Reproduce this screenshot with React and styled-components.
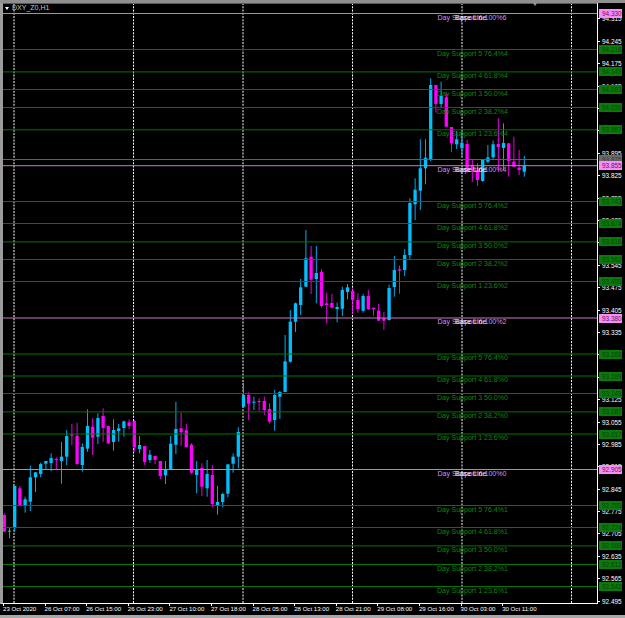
import React from 'react';
import styled, { createGlobalStyle } from 'styled-components';

const GlobalStyle = createGlobalStyle`
  html, body {
    margin: 0;
    padding: 0;
    background: #000;
  }
`;

// type, wick top, body top, body bottom, wick bottom (page y)
const CANDLES = [
  ['m', 513.3, 515, 531.7, 531.7], ['c', 527.3, 530.7, 531.7, 538.3], ['c', 486, 486, 527, 531.7],
  ['m', 486, 488.3, 505.3, 505.3], ['c', 496.7, 499.3, 505.3, 512.7], ['c', 465.7, 477.3, 501.7, 511],
  ['c', 472.3, 472.3, 477.3, 492], ['c', 462.7, 464, 474, 477.3], ['c', 461, 461, 463.7, 469.3],
  ['c', 453.3, 458, 463, 471.3], ['m', 457.3, 459, 460, 469.7], ['c', 442, 456.7, 461, 483.7],
  ['c', 430, 436, 456.7, 465], ['m', 424, 434.3, 435.7, 445.3], ['m', 422.7, 435.7, 464, 465],
  ['c', 443.3, 447, 465, 471.7], ['c', 409.3, 426, 448.7, 451.7], ['m', 418.3, 426.7, 437.7, 455],
  ['c', 413.3, 418, 436.7, 444], ['m', 408.3, 416, 428, 441.7], ['m', 426, 426, 443.3, 444],
  ['c', 419.3, 430, 442, 450.7], ['c', 424, 428.3, 431, 441.7], ['c', 420.7, 421.3, 428, 436.7],
  ['m', 419.3, 422.3, 426, 429.3], ['m', 420, 421, 447.3, 451.7], ['c', 436, 445, 449, 453.3],
  ['m', 446, 446, 462, 465], ['c', 450, 454.7, 460, 462.7], ['m', 456, 456, 460, 464],
  ['m', 461, 461, 476, 479.3], ['c', 461, 469.7, 475.3, 484], ['c', 436, 443.7, 469.7, 469.7],
  ['c', 401.7, 429, 444.7, 454], ['m', 412.3, 428.3, 432.3, 445.7], ['m', 424, 430.3, 447.3, 447.3],
  ['m', 443.3, 444.7, 472.7, 474], ['c', 461, 469, 475, 493.3], ['m', 463.3, 468, 486.7, 496],
  ['c', 460, 474, 488.3, 496.7], ['m', 465.3, 475, 504, 507.3], ['c', 486, 502, 505, 514.7],
  ['c', 492.7, 494, 502, 507.3], ['c', 464.3, 464.3, 493.7, 497.3], ['c', 453.3, 456.7, 463.7, 472.7],
  ['c', 427.3, 432, 456.7, 468.3], ['c', 382.7, 395, 406.7, 406.7], ['m', 392.3, 395, 403.7, 420],
  ['c', 396.7, 401.7, 402.7, 410], ['m', 398.3, 401, 402, 410.7], ['m', 396.7, 401, 410, 415],
  ['m', 403.3, 409, 421.7, 423.3], ['c', 390, 395, 420, 430.7], ['c', 391, 392, 396.7, 419],
  ['c', 335, 361.3, 392, 392], ['c', 310, 321.7, 361.7, 362.7], ['c', 302.7, 303.3, 321.7, 332],
  ['c', 279, 287.3, 305, 315], ['c', 230, 258.3, 286.7, 286.7], ['m', 246, 256.7, 279.7, 294],
  ['c', 246, 273, 279, 303.3], ['m', 269, 272, 306, 307.7], ['m', 292.7, 303.3, 305, 323.3],
  ['m', 294, 303, 307.7, 307.7], ['c', 302.7, 307, 309, 322.3], ['c', 286.7, 290, 308.7, 316],
  ['c', 284, 287.3, 292, 299.3], ['m', 288.3, 291, 300, 314.3], ['m', 293.3, 300, 309, 312.7],
  ['c', 294, 296, 310.7, 312.7], ['m', 290, 296, 309, 310], ['m', 307.7, 307.7, 309, 315.7],
  ['m', 304, 310.7, 320.7, 320.7], ['m', 312, 318, 320.7, 330], ['c', 284.7, 288, 320, 320.7],
  ['c', 256, 270, 287, 296.7], ['m', 265.7, 269.3, 270.7, 293.7], ['c', 249.3, 255, 270, 276],
  ['c', 198.3, 203, 255, 259.3], ['c', 178.3, 189.7, 204.3, 220], ['c', 139.3, 168.3, 190.7, 210],
  ['c', 139.3, 157.7, 168.3, 184.3], ['c', 78.3, 85, 160, 161], ['m', 85, 85, 104, 112.7],
  ['c', 81.7, 96, 104, 108.3], ['m', 93.3, 97.3, 126.7, 126.7], ['m', 127, 127, 143.3, 152.3],
  ['c', 131, 139.3, 144.3, 149], ['c', 131.7, 142.7, 148.3, 156.7], ['m', 140, 144, 170.7, 172.7],
  ['m', 160, 165, 170, 181.7], ['m', 163.3, 170, 180, 186], ['c', 159.3, 160, 181, 181.7],
  ['c', 145, 157.3, 161.7, 163.3], ['c', 140.7, 144.3, 157.3, 160], ['m', 118.3, 144, 147, 171.7],
  ['c', 123.3, 143, 148, 170], ['m', 143.3, 143.3, 161, 176.7], ['m', 136.7, 161.7, 166.7, 166.7],
  ['m', 150, 167.7, 170, 175], ['c', 156, 166, 171.7, 176.7],
];

const CANDLE_COLORS = { c: '#00bfff', m: '#ff00ff' };
const GRID_X = [14, 133.5, 243, 352.5, 462, 571.5];

const LEVELS = [
  { y: 13.5, price: '94.330', kind: 'base', label: 'Day Support 6 100%6' },
  { y: 49.5, price: '94.218', kind: 'support', label: 'Day Support 5 76.4%4' },
  { y: 71.9, price: '94.149', kind: 'support', label: 'Day Support 4 61.8%4' },
  { y: 89.5, price: '94.093', kind: 'support', label: 'Day Support 3 50.0%4' },
  { y: 107.5, price: '94.036', kind: 'support', label: 'Day Support 2 38.2%4' },
  { y: 129.8, price: '93.967', kind: 'support', label: 'Day Support 1 23.6%4' },
  { y: 165.7, price: '93.855', kind: 'base', label: 'Day Support 6 100%4' },
  { y: 201.5, price: '93.743', kind: 'support', label: 'Day Support 5 76.4%2' },
  { y: 223.5, price: '93.674', kind: 'support', label: 'Day Support 4 61.8%2' },
  { y: 241.9, price: '93.618', kind: 'support', label: 'Day Support 3 50.0%2' },
  { y: 259.5, price: '93.562', kind: 'support', label: 'Day Support 2 38.2%2' },
  { y: 281.5, price: '93.493', kind: 'support', label: 'Day Support 1 23.6%2' },
  { y: 318, price: '93.380', kind: 'base', label: 'Day Support 6 100%2' },
  { y: 354, price: '93.268', kind: 'support', label: 'Day Support 5 76.4%0' },
  { y: 376, price: '93.199', kind: 'support', label: 'Day Support 4 61.8%0' },
  { y: 393.5, price: '93.143', kind: 'support', label: 'Day Support 3 50.0%0' },
  { y: 411.9, price: '93.087', kind: 'support', label: 'Day Support 2 38.2%0' },
  { y: 434, price: '93.017', kind: 'support', label: 'Day Support 1 23.6%0' },
  { y: 469.5, price: '92.905', kind: 'base', label: 'Day Support 6 100%0' },
  { y: 505.5, price: '92.793', kind: 'support', label: 'Day Support 5 76.4%1' },
  { y: 527.5, price: '92.724', kind: 'support', label: 'Day Support 4 61.8%1' },
  { y: 545.9, price: '92.668', kind: 'support', label: 'Day Support 3 50.0%1' },
  { y: 564.5, price: '92.612', kind: 'support', label: 'Day Support 2 38.2%1' },
  { y: 586.5, price: '92.543', kind: 'support', label: 'Day Support 1 23.6%1' },
];

const LEVEL_COLORS = { base: '#c47ac4', support: '#007600' };

const TIMES = [
  '23 Oct 2020', '26 Oct 07:00', '26 Oct 15:00', '26 Oct 23:00', '27 Oct 10:00', '27 Oct 18:00',
  '28 Oct 05:00', '28 Oct 13:00', '28 Oct 21:00', '29 Oct 08:00', '29 Oct 16:00', '30 Oct 03:00',
  '30 Oct 11:00',
];

const PRICES = Array.from({ length: 27 }, (_, i) => (94.315 - i * 0.07).toFixed(3));

const TERMINAL_FONT = `"Liberation Sans", Arial, sans-serif`;

const Window = styled.div`
  box-sizing: border-box;
  display: flex;
  flex-direction: column;
  width: 625px;
  height: 618px;
  overflow: hidden;
  background: #000;
  border-top: 3px solid #8f8f8f;
  border-bottom: 3px solid #a8a8a8;
  font-family: ${TERMINAL_FONT};
`;

const ChartRow = styled.div`
  display: flex;
  height: 601px;
`;

const Plot = styled.div`
  box-sizing: border-box;
  position: relative;
  width: 598px;
  height: 601px;
  overflow: hidden;
  border-left: 3px solid #9c9c9c;
  border-right: 1px solid #fff;
  border-bottom: 1px solid #fff;
`;

const ChartDrawing = styled.svg`
  display: block;
  width: 594px;
  height: 600px;
`;

const Title = styled.div`
  position: absolute;
  top: 1px;
  left: 2px;
  display: flex;
  align-items: center;
  gap: 3px;
  font-size: 7px;
  line-height: 8px;
  color: #c4c4c4;
`;

const TitleArrow = styled.span`
  width: 0;
  height: 0;
  border-left: 2.5px solid transparent;
  border-right: 2.5px solid transparent;
  border-top: 3px solid #fff;
`;

const ShiftMarker = styled.span`
  position: absolute;
  top: 0;
  left: 530px;
  width: 0;
  height: 0;
  border-left: 2.5px solid transparent;
  border-right: 2.5px solid transparent;
  border-top: 3px solid #8d9aa5;
`;

const LevelLabel = styled.span.attrs((p) => ({ style: { top: p.$y } }))`
  position: absolute;
  left: ${(p) => p.$left}px;
  font-size: 7.05px;
  line-height: 8px;
  white-space: nowrap;
  color: ${(p) => p.$color};
`;

const PriceAxis = styled.div`
  position: relative;
  flex: 1;
  padding-top: 4.8px;
`;

const PriceTick = styled.div`
  display: flex;
  align-items: center;
  height: 22.4px;
  font-size: 6.4px;
  color: #fff;

  &::before {
    content: '';
    width: 2px;
    height: 1px;
    margin-right: 2px;
    background: #fff;
  }
`;

const PriceTag = styled.span.attrs((p) => ({ style: { top: p.$y } }))`
  position: absolute;
  left: 1px;
  box-sizing: border-box;
  width: 23px;
  height: 9px;
  padding-left: 3px;
  font-size: 6.4px;
  line-height: 9px;
  background: ${(p) => p.$bg};
  color: ${(p) => p.$fg};
`;

const TimeAxis = styled.div`
  display: flex;
  padding-left: 3px;
`;

const TimeCell = styled.div`
  position: relative;
  flex: none;
  width: 41.6px;
  padding-top: 1px;
  font-size: 6.1px;
  line-height: 8px;
  white-space: nowrap;
  color: #fff;

  &::before {
    content: '';
    position: absolute;
    top: 0;
    left: 0;
    width: 1px;
    height: 2px;
    background: #fff;
  }
`;

const Candle = ({ data, index }) => {
  const [type, wickTop, bodyTop, bodyBottom, wickBottom] = data;
  const x = 4.3 + index * 5.2;
  const color = CANDLE_COLORS[type];
  return (
    <g fill={color}>
      <rect x={x - 0.45} y={wickTop} width={0.9} height={wickBottom - wickTop} />
      <rect x={x - 1.65} y={bodyTop} width={3.3} height={Math.max(bodyBottom - bodyTop, 1)} />
    </g>
  );
};

const tagColors = (kind) => {
  if (kind === 'base') return { bg: '#f98cf9', fg: '#5a1a5a' };
  if (kind === 'gray') return { bg: '#6a6a6a', fg: '#3c3c3c' };
  return { bg: '#0a7a0a', fg: '#0b430b' };
};

const App = () => {
  // every chart y below is a page y; plot and axis start 3px down
  const tags = [...LEVELS, { y: 159.5, price: '93.875', kind: 'gray' }].sort((a, b) => a.y - b.y);

  return (
    <>
      <GlobalStyle />
      <Window>
        <ChartRow>
          <Plot>
            <ChartDrawing viewBox="3 3 594 600">
              {GRID_X.map((x) => (
                <line key={x} x1={x} x2={x} y1={3} y2={603} stroke="#fff" strokeDasharray="2 1.25" />
              ))}
              {CANDLES.map((c, i) => (
                <Candle key={i} data={c} index={i} />
              ))}
              <line x1={3} x2={597} y1={3.5} y2={3.5} stroke="#5a5a5a" />
              <line x1={3} x2={597} y1={159.5} y2={159.5} stroke="#606060" />
              {LEVELS.map((l) => (
                <line key={l.y} x1={3} x2={597} y1={l.y} y2={l.y} stroke={LEVEL_COLORS[l.kind]} />
              ))}
            </ChartDrawing>
            <Title>
              <TitleArrow />
              DXY_Z0,H1
            </Title>
            <ShiftMarker />
            {LEVELS.map((l) =>
              l.kind === 'base' ? (
                <React.Fragment key={l.y}>
                  <LevelLabel $y={l.y - 3} $left={434.5} $color="#d98cf0">{l.label}</LevelLabel>
                  <LevelLabel $y={l.y - 3} $left={452} $color="#f0f0f0">Base Line</LevelLabel>
                </React.Fragment>
              ) : (
                <LevelLabel key={l.y} $y={l.y - 3} $left={434} $color="#0c8a0c">{l.label}</LevelLabel>
              )
            )}
          </Plot>
          <PriceAxis>
            {PRICES.map((p) => (
              <PriceTick key={p}>{p}</PriceTick>
            ))}
            {tags.map((t) => {
              const { bg, fg } = tagColors(t.kind);
              return (
                <PriceTag key={t.price} $y={t.y - 7.5} $bg={bg} $fg={fg}>{t.price}</PriceTag>
              );
            })}
          </PriceAxis>
        </ChartRow>
        <TimeAxis>
          {TIMES.map((t) => (
            <TimeCell key={t}>{t}</TimeCell>
          ))}
        </TimeAxis>
      </Window>
    </>
  );
};

export default App;
